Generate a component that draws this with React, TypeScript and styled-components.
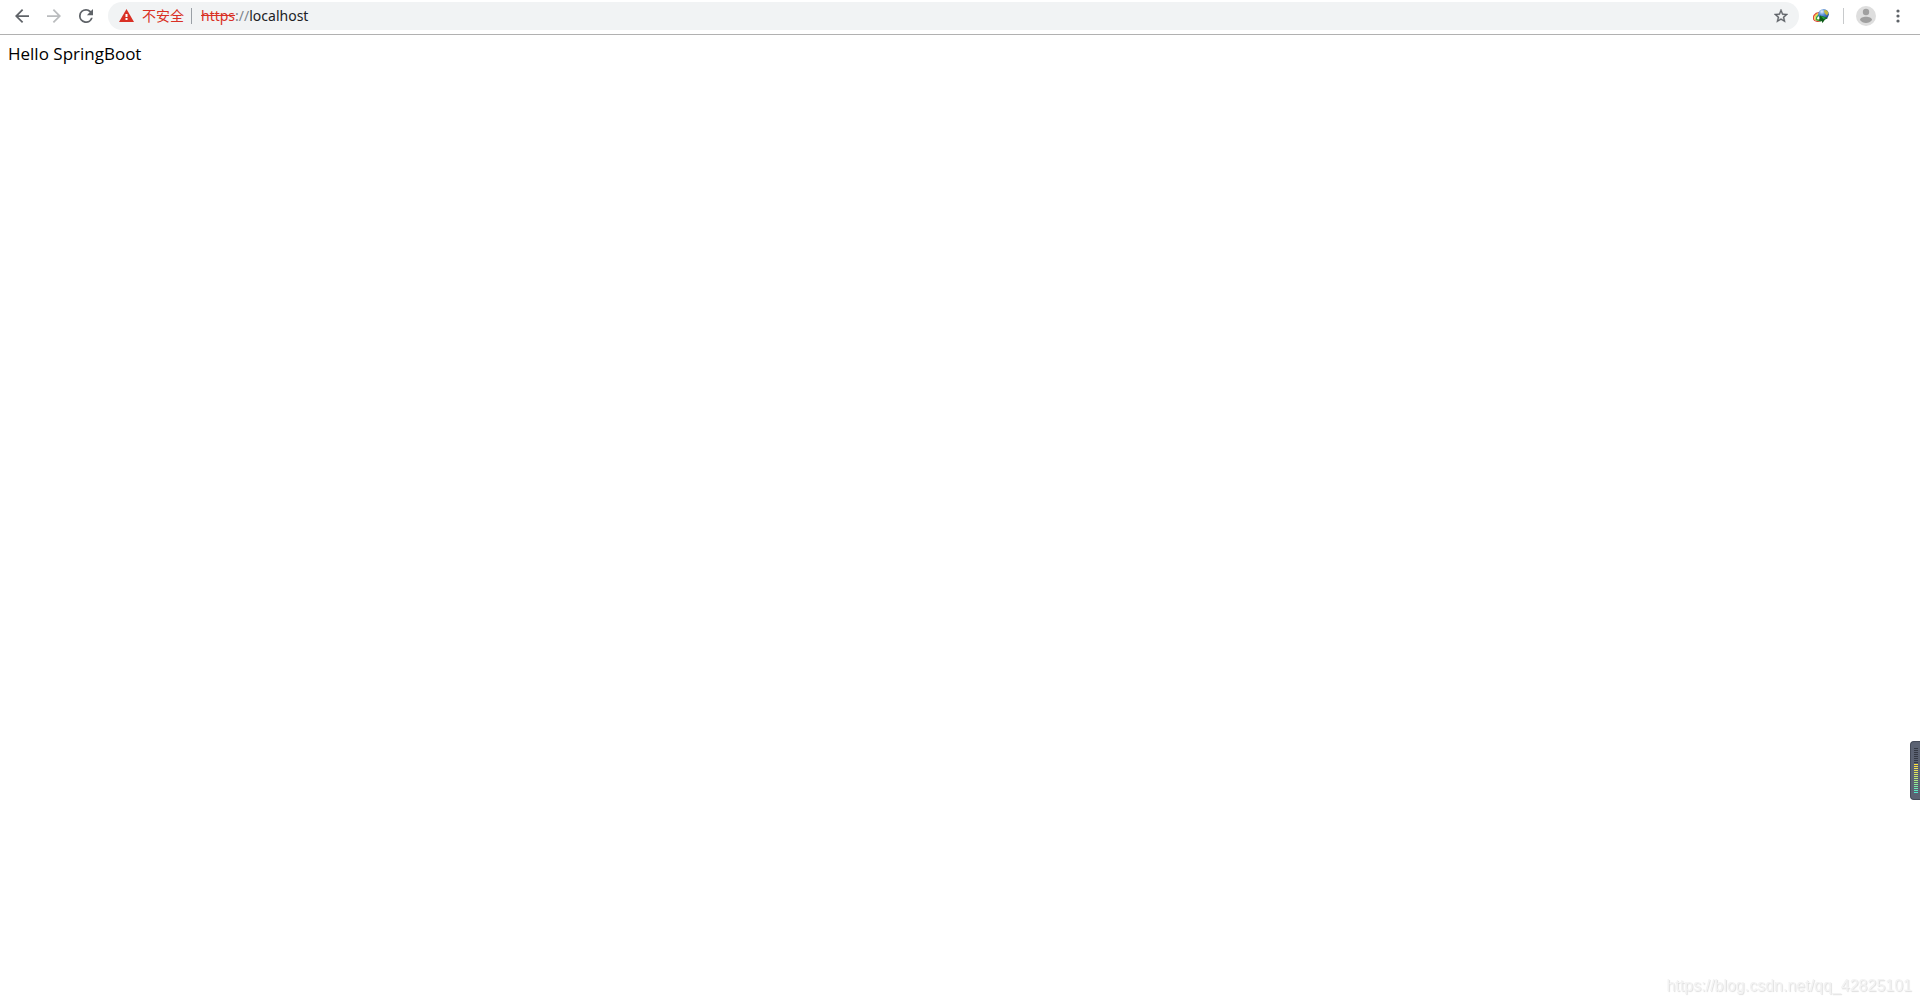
import React from "react";
import styled, { createGlobalStyle } from "styled-components";

const GlobalStyle = createGlobalStyle`
  * { box-sizing: border-box; }
  body {
    margin: 0;
    background: #fff;
    font-family: "Noto Sans", "Noto Sans CJK SC", sans-serif;
  }
`;

const Window = styled.div`
  min-height: 100vh;
  display: flex;
  flex-direction: column;
`;

const Toolbar = styled.header`
  display: flex;
  align-items: center;
  gap: 8px;
  padding: 2px 12px 4px 8px;
  border-bottom: 1px solid #b1b1b1;
`;

const Group = styled.div<{ $gap: number }>`
  display: flex;
  align-items: center;
  gap: ${(p) => p.$gap}px;
`;

const IconButton = styled.button<{ $size?: number }>`
  display: flex;
  align-items: center;
  justify-content: center;
  width: ${(p) => p.$size ?? 28}px;
  height: 28px;
  padding: 0;
  border: 0;
  border-radius: 14px;
  background: none;
  color: #5f6368;
  &:disabled { color: #babcbe; }
  svg { display: block; fill: currentColor; }
`;

const Omnibox = styled.div`
  flex: 1;
  display: flex;
  align-items: center;
  height: 28px;
  padding: 0 4px 0 11px;
  border-radius: 14px;
  background: #f1f3f4;
  font-size: 14px;
`;

const Security = styled.button`
  display: flex;
  align-items: center;
  gap: 8px;
  padding: 0 0 2px;
  border: 0;
  background: none;
  color: #d93025;
  font: 14px/20px "Noto Sans CJK SC", sans-serif;
  svg { display: block; }
`;

const Divider = styled.span<{ $color: string }>`
  width: 1px;
  height: 16px;
  background: ${(p) => p.$color};
`;

const AddressDivider = styled(Divider)`
  margin-left: 7px;
`;

const Address = styled.label`
  flex: 1;
  display: flex;
  align-items: center;
  padding-left: 9px;
  line-height: 20px;
  color: #80868b;
`;

const Scheme = styled.s`
  color: #d93025;
`;

const HostInput = styled.input`
  flex: 1;
  min-width: 0;
  padding: 0;
  border: 0;
  outline: 0;
  background: none;
  color: #202124;
  font: inherit;
`;

const Page = styled.main`
  flex: 1;
  padding: 8px;
  color: #000;
  font: 17px/22px "Open Sans", sans-serif;
`;

const Watermark = styled.div`
  position: fixed;
  right: 8px;
  bottom: 8px;
  color: #f3f3f3;
  font: 16px/20px "Liberation Sans", Arial, sans-serif;
  text-shadow: 1px 1px 1px #dedede;
`;

const Meter = styled.aside`
  position: fixed;
  right: 0;
  top: 741px;
  width: 10px;
  height: 59px;
  padding: 6px 2px 0 3px;
  display: flex;
  flex-direction: column;
  gap: 1px;
  border: 1px solid #444a58;
  border-right: 0;
  border-radius: 4px 0 0 4px;
  background: #5b6272;
`;

const Bar = styled.span<{ $color: string }>`
  height: 1px;
  background: ${(p) => p.$color};
`;

const bars = [
  "#343944", "#343944", "#343944", "#343944",
  "#343944", "#343944", "#343944", "#343944",
  "#fbe13b", "#f6e145", "#f0e24c", "#e8e355", "#dfe45c",
  "#d4e664", "#c8e76c", "#bae876", "#abe980", "#9cea8a",
  "#8cea96", "#7ceaa3", "#6de9b0", "#5ee8be", "#50e6cc",
];

function ExtensionIcon() {
  return (
    <svg width="16" height="14" viewBox="0 0 16 14">
      <defs>
        <radialGradient id="globe" cx="35%" cy="25%" r="80%">
          <stop offset="0" stopColor="#e4f0fb" />
          <stop offset=".4" stopColor="#5e92d8" />
          <stop offset="1" stopColor="#183d88" />
        </radialGradient>
      </defs>
      <path d="M6 3.600C1.500 4-.2 7.500 .8 10.500c1 1.700 4 2.300 6.500 1.500" fill="none" stroke="#df4838" strokeWidth="1.300" />
      <path d="M6.500 4.800C3 5 1.200 7.500 2.200 10.500L7 11.500" fill="none" stroke="#f2d33d" strokeWidth="1.400" />
      <path d="M7 6C4.500 6.500 2.900 8 3.500 10.800L8 12" fill="none" stroke="#37a343" strokeWidth="1.400" />
      <circle cx="10.500" cy="5.300" r="5.300" fill="url(#globe)" />
      <path d="M11.500 .8c2 .2 3.500 1.700 3.900 3.200l-1.400 2.500-2-2-1-2z" fill="#c6b83c" />
      <path d="M7 6.500l8 2.500-3 1.500-2.500 3.500-1-2-2.500-.5z" fill="#0e5c18" />
      <path d="M7.500 7l6 2-3 1z" fill="#27a53a" />
    </svg>
  );
}

export default function App() {
  return (
    <>
      <GlobalStyle />
      <Window>
        <Toolbar>
          <Group as="nav" $gap={4}>
            <IconButton aria-label="Back">
              <svg width="14" height="14" viewBox="4 4 16 16">
                <path d="M20 11H7.830l5.590-5.590L12 4l-8 8 8 8 1.410-1.410L7.830 13H20z" />
              </svg>
            </IconButton>
            <IconButton aria-label="Forward" disabled>
              <svg width="14" height="14" viewBox="4 4 16 16">
                <path d="M12 4l-1.410 1.410L16.170 11H4v2h12.170l-5.580 5.590L12 20l8-8z" />
              </svg>
            </IconButton>
            <IconButton aria-label="Reload">
              <svg width="14" height="14" viewBox="4 4 16 16">
                <path d="M17.650 6.350A7.960 7.960 0 0 0 12 4a8 8 0 1 0 7.730 10h-2.080A6 6 0 1 1 12 6c1.660 0 3.140.69 4.220 1.780L13 11h7V4z" />
              </svg>
            </IconButton>
          </Group>
          <Omnibox>
            <Security>
              <svg width="15" height="13" viewBox="0 0 15 13">
                <path d="M7.500 0L15 13H0z" fill="#d93025" />
                <path d="M6.500 5h2v3h-2zM6.500 9h2v2h-2z" fill="#fff" />
              </svg>
              不安全
            </Security>
            <AddressDivider $color="#9aa0a6" />
            <Address>
              <Scheme>https</Scheme>://
              <HostInput aria-label="Address" defaultValue="localhost" spellCheck={false} />
            </Address>
            <IconButton aria-label="Bookmark this page">
              <svg width="14" height="14" viewBox="2 2 20 20">
                <path
                  stroke="currentColor"
                  strokeWidth=".5"
                  d="M22 9.240l-7.190-.62L12 2 9.190 8.630 2 9.240l5.460 4.730L5.820 21 12 17.270 18.180 21l-1.630-7.030zM12 15.400l-3.760 2.270 1-4.280-3.320-2.880 4.380-.38L12 6.100l1.710 4.040 4.380.38-3.320 2.880 1 4.280z"
                />
              </svg>
            </IconButton>
          </Omnibox>
          <Group $gap={8}>
            <IconButton aria-label="Download manager">
              <ExtensionIcon />
            </IconButton>
            <Divider $color="#c8cacc" />
            <IconButton aria-label="Profile">
              <svg width="20" height="20" viewBox="0 0 20 20">
                <circle cx="10" cy="10" r="10" fill="#dedede" />
                <circle cx="10" cy="6" r="3.200" fill="#a0a0a0" />
                <path d="M4 14c0-2 3.200-3.200 6-3.200s6 1.200 6 3.200c-1.400 2-3.500 3-6 3s-4.600-1-6-3z" fill="#a0a0a0" />
              </svg>
            </IconButton>
            <IconButton aria-label="Menu" $size={20}>
              <svg width="4" height="14" viewBox="0 0 4 14">
                <circle cx="2" cy="2" r="1.600" />
                <circle cx="2" cy="7" r="1.600" />
                <circle cx="2" cy="12" r="1.600" />
              </svg>
            </IconButton>
          </Group>
        </Toolbar>
        <Page>Hello SpringBoot</Page>
      </Window>
      <Meter aria-label="Level meter">
        {bars.map((color, i) => (
          <Bar key={i} $color={color} />
        ))}
      </Meter>
      <Watermark>https://blog.csdn.net/qq_42825101</Watermark>
    </>
  );
}
